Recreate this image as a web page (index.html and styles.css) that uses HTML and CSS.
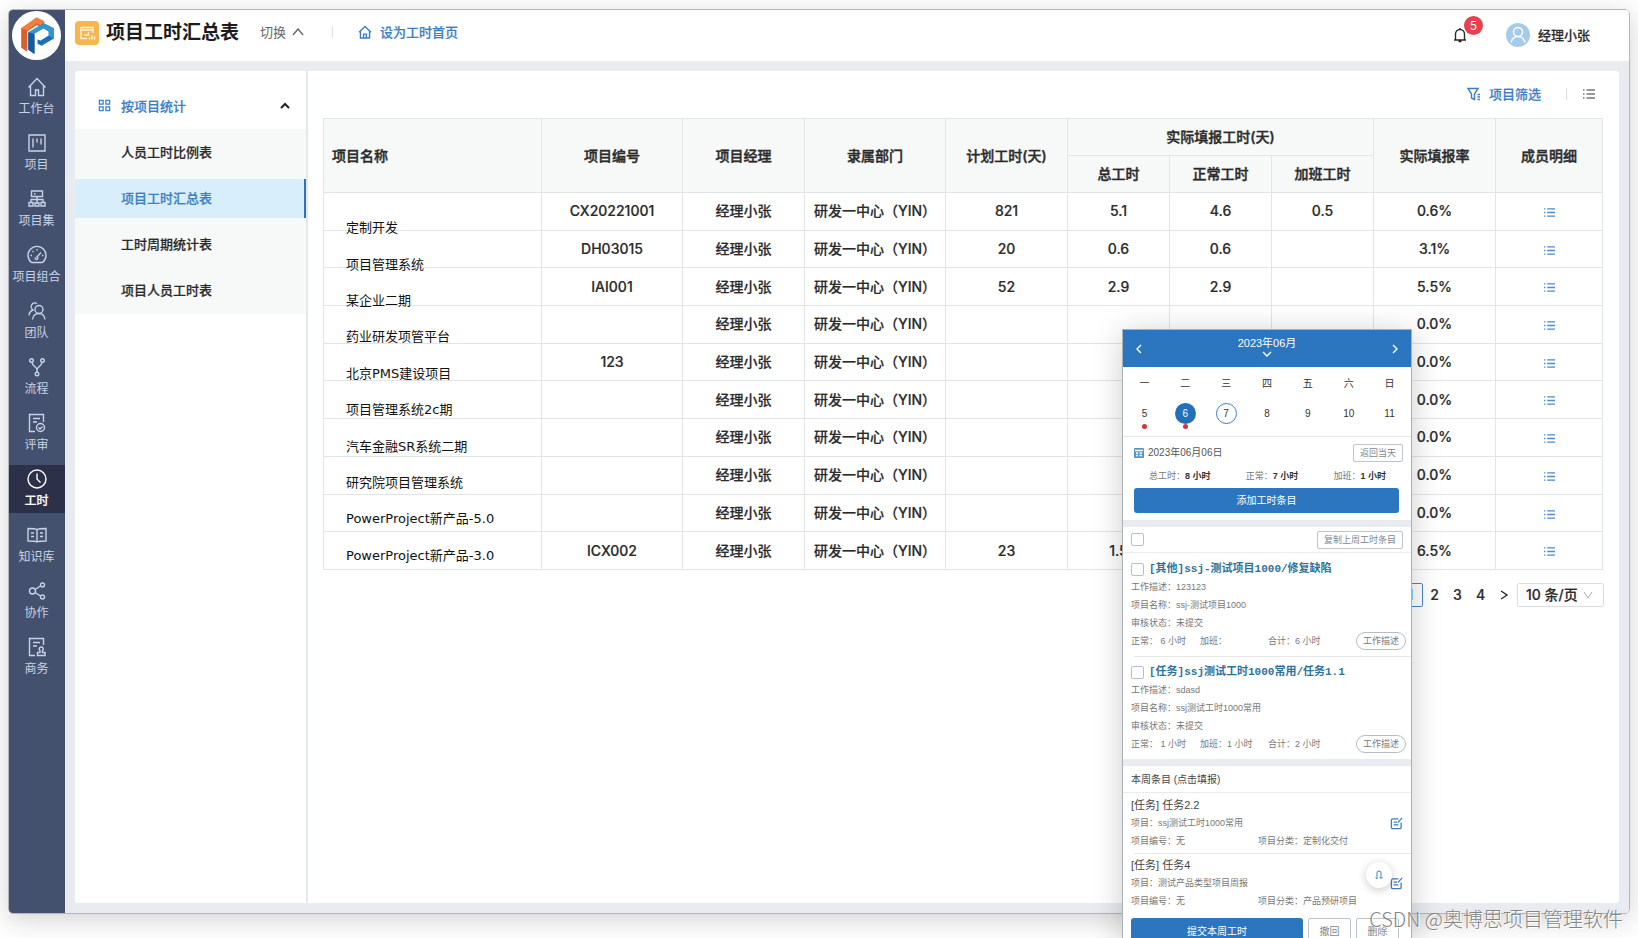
FILE: index.html
```html
<!DOCTYPE html>
<html lang="zh-CN">
<head>
<meta charset="utf-8">
<title>项目工时汇总表</title>
<link rel="stylesheet" href="styles.css">
</head>
<body>
<svg class="sprite" aria-hidden="true">
  <symbol id="list" viewBox="0 0 14 12"><path d="M1 2h1.500M1 6h1.500M1 10h1.500M4.500 2H13M4.500 6H13M4.500 10H13"/></symbol>
  <symbol id="edit" viewBox="0 0 14 14"><path d="M9 2H3a1.500 1.500 0 0 0-1.500 1.500v7.500A1.500 1.500 0 0 0 3 12.500h7.500A1.500 1.500 0 0 0 12 11V6M4 5.500h3.500M4 8.500h5M8.500 6l4.500-5"/></symbol>
</svg>

<div class="window">
  <nav class="rail" aria-label="主导航">
    <a class="logo" href="#" aria-label="首页">
      <svg viewBox="0 0 48 48"><circle cx="24" cy="24" r="24" fill="#fff"/>
        <path d="M9 17v19l6 4V20l9-6 4 1 4-4-8-4z" fill="#d9602a"/><path d="M9 17 24 6l8 4-4 4-4-2-9 7z" fill="#ee8040"/>
        <path d="m16 21 15-9 10 5v10l-12 7-4-2v-4l3 1 8-5v-4l-5-3-9 5v20l-6-4z" fill="#1c6fb5"/><path d="m31 12 10 5v10l-5-3v-4l-5-3-9 5-6-1z" fill="#3496d2"/><path d="m16 21 6 2v19l-6-4z" fill="#185a9f"/></svg>
    </a>
    <ul class="rail-list">
      <li><a href="#"><svg viewBox="0 0 20 20"><path d="m1.500 10.500 8.500-9 8.500 9M3.500 9v9.500h5v-5.500h3v5.500h5V9"/></svg>工作台</a></li>
      <li><a href="#"><svg viewBox="0 0 20 20"><path d="M2 2h16v16H2zM6 5.500v9M10 5.500v4M14 5.500v6"/></svg>项目</a></li>
      <li><a href="#"><svg viewBox="0 0 20 20"><path d="M4.500 2h11v5.500h-11zM7 4.700h1.500M10 7.500V15M4 13.500v-3h12v3M2 13.500h4V17H2zM8 14h4v3H8zM14 13.500h4V17h-4z"/></svg>项目集</a></li>
      <li><a href="#"><svg viewBox="0 0 20 20"><path d="M4.500 17.500a9 9 0 1 1 11 0zM9.500 12.500l4.500-5M10 4v1.500M5.500 6l1 1M3.500 10.500H5M15 10.500h1.500M8.500 12.500a1.200 1.200 0 1 0 2 0"/></svg>项目组合</a></li>
      <li><a href="#"><svg viewBox="0 0 20 20"><circle cx="12" cy="8.500" r="4"/><path d="M5.500 18.500c.5-4 3-6 6.500-6s5.500 2 6 6M10 2.500a3.800 3.800 0 1 0-4 6.500c-2.500 1-4 2.500-4 5.500"/></svg>团队</a></li>
      <li><a href="#"><svg viewBox="0 0 20 20"><circle cx="4.500" cy="3.500" r="1.800"/><circle cx="15.500" cy="3.500" r="1.800"/><circle cx="10" cy="17" r="1.800"/><path d="M5 5.500c.5 4 5 4 5 7.500v2M15 5.500c-.5 4-5 4-5 7.500"/></svg>流程</a></li>
      <li><a href="#"><svg viewBox="0 0 20 20"><path d="M8 18.500H2.500v-17h14V9M6 5.500h7M6 9h4"/><circle cx="13.500" cy="14.500" r="4"/><path d="m11.500 14.500 1.500 1.500 2.500-2.500"/></svg>评审</a></li>
      <li><a href="#" class="current" aria-current="page"><svg viewBox="0 0 20 20"><circle cx="10" cy="10" r="9"/><path d="M10 4.500V10l3.500 3.500"/></svg>工时</a></li>
      <li><a href="#"><svg viewBox="0 0 20 20"><path d="M10 4.500C8.500 3.500 6 3.500 1 3.500v12.500c5 0 7.500 0 9 1 1.500-1 4-1 9-1V3.500c-5 0-7.500 0-9 1zV17M4 8h3M4 11.500h3M13 8h3M13 11.500h3"/></svg>知识库</a></li>
      <li><a href="#"><svg viewBox="0 0 20 20"><circle cx="5.500" cy="10" r="3"/><circle cx="15.500" cy="4" r="2"/><circle cx="15.500" cy="16" r="2"/><path d="m8 8.500 5.500-3.500M8 11.500l5.500 3.500"/></svg>协作</a></li>
      <li><a href="#"><svg viewBox="0 0 20 20"><path d="M8 18.500H2.500v-17h14V8M6 5.500h7M6 9h4M10.500 18.500v-3h2.500v-2a2 2 0 1 1 2.500 0v2H18v3z"/></svg>商务</a></li>
    </ul>
  </nav>

  <div class="main">
    <header class="topbar">
      <svg class="app-icon" viewBox="0 0 24 24"><rect width="24" height="24" rx="4" fill="#f6b64d"/><g fill="none" stroke="#fff2d8" stroke-width="1.500"><path d="M12 17.500H6v-11h12V12M6 9h12M9.500 14h4V11M14.500 18.500v-2M17 18.500v-4M19.500 18.500v-3"/></g></svg>
      <h1>项目工时汇总表</h1>
      <button class="switch" type="button">切换<svg viewBox="0 0 12 8"><path d="m1 7 5-6 5 6"/></svg></button>
      <span class="rule"></span>
      <a class="set-home" href="#"><svg viewBox="0 0 20 20"><path d="m1.500 10.500 8.500-8.500 8.500 8.500M3.500 9v9.500h13V9M8 18v-5h4v5"/></svg>设为工时首页</a>
      <button class="bell" type="button" aria-label="通知"><svg viewBox="0 0 14 16"><path d="M1 13h12M2.500 13V7a4.500 4.500 0 0 1 9 0v6M7 2.500V1M5.500 14.500h3"/></svg><span class="badge">5</span></button>
      <a class="user" href="#"><svg viewBox="0 0 24 24"><circle cx="12" cy="12" r="12" fill="#a5cbea"/><g fill="none" stroke="#fff" stroke-width="1.400"><circle cx="12" cy="9" r="4.500"/><path d="M5 19.500c1-4 3.500-6 7-6s6 2 7 6"/></g></svg>经理小张</a>
    </header>

    <div class="panel">
      <aside class="menu">
        <button class="menu-head" type="button" aria-expanded="true"><svg viewBox="0 0 14 14"><path d="M1.500 1.500h4v4h-4zM8.500 1.500h4v4h-4zM1.500 8.500h4v4h-4zM8.500 8.500h4v4h-4z"/></svg><span>按项目统计</span><svg class="fold" viewBox="0 0 10 8"><path d="m1 6 4-4 4 4"/></svg></button>
        <ul>
          <li><a href="#">人员工时比例表</a></li>
          <li><a href="#" class="current">项目工时汇总表</a></li>
          <li><a href="#">工时周期统计表</a></li>
          <li><a href="#">项目人员工时表</a></li>
        </ul>
      </aside>

      <section class="report">
        <div class="tools">
          <button class="filter" type="button"><svg viewBox="0 0 14 14"><path d="M1 1.500h10L7.500 7v5.500l-3-1.500V7zM10.500 7.500H13M10.500 10H13M10.500 12.500H13"/></svg>项目筛选</button>
          <span class="rule"></span>
          <button class="columns" type="button" aria-label="列表"><svg><use href="#list"/></svg></button>
        </div>
        <div class="table-box">
          <table>
            <colgroup><col class="w-name"><col class="w-dept"><col class="w-mid"><col class="w-dept"><col class="w-mid"><col class="w-hour"><col class="w-hour"><col class="w-hour"><col class="w-mid"><col class="w-last"></colgroup>
            <thead>
              <tr><th rowspan="2" class="left">项目名称</th><th rowspan="2">项目编号</th><th rowspan="2">项目经理</th><th rowspan="2">隶属部门</th><th rowspan="2">计划工时(天)</th><th colspan="3">实际填报工时(天)</th><th rowspan="2">实际填报率</th><th rowspan="2">成员明细</th></tr>
              <tr><th>总工时</th><th>正常工时</th><th>加班工时</th></tr>
            </thead>
            <tbody>
              <tr><td></td><td>CX20221001</td><td>经理小张</td><td>研发一中心（YIN）</td><td>821</td><td>5.1</td><td>4.6</td><td>0.5</td><td>0.6%</td><td><a href="#" aria-label="明细"><svg><use href="#list"/></svg></a></td></tr>
              <tr><td></td><td>DH03015</td><td>经理小张</td><td>研发一中心（YIN）</td><td>20</td><td>0.6</td><td>0.6</td><td></td><td>3.1%</td><td><a href="#" aria-label="明细"><svg><use href="#list"/></svg></a></td></tr>
              <tr><td></td><td>IAI001</td><td>经理小张</td><td>研发一中心（YIN）</td><td>52</td><td>2.9</td><td>2.9</td><td></td><td>5.5%</td><td><a href="#" aria-label="明细"><svg><use href="#list"/></svg></a></td></tr>
              <tr><td></td><td></td><td>经理小张</td><td>研发一中心（YIN）</td><td></td><td></td><td></td><td></td><td>0.0%</td><td><a href="#" aria-label="明细"><svg><use href="#list"/></svg></a></td></tr>
              <tr><td></td><td>123</td><td>经理小张</td><td>研发一中心（YIN）</td><td></td><td></td><td></td><td></td><td>0.0%</td><td><a href="#" aria-label="明细"><svg><use href="#list"/></svg></a></td></tr>
              <tr><td></td><td></td><td>经理小张</td><td>研发一中心（YIN）</td><td></td><td></td><td></td><td></td><td>0.0%</td><td><a href="#" aria-label="明细"><svg><use href="#list"/></svg></a></td></tr>
              <tr><td></td><td></td><td>经理小张</td><td>研发一中心（YIN）</td><td></td><td></td><td></td><td></td><td>0.0%</td><td><a href="#" aria-label="明细"><svg><use href="#list"/></svg></a></td></tr>
              <tr><td></td><td></td><td>经理小张</td><td>研发一中心（YIN）</td><td></td><td></td><td></td><td></td><td>0.0%</td><td><a href="#" aria-label="明细"><svg><use href="#list"/></svg></a></td></tr>
              <tr><td></td><td></td><td>经理小张</td><td>研发一中心（YIN）</td><td></td><td></td><td></td><td></td><td>0.0%</td><td><a href="#" aria-label="明细"><svg><use href="#list"/></svg></a></td></tr>
              <tr><td></td><td>ICX002</td><td>经理小张</td><td>研发一中心（YIN）</td><td>23</td><td>1.5</td><td></td><td></td><td>6.5%</td><td><a href="#" aria-label="明细"><svg><use href="#list"/></svg></a></td></tr>
            </tbody>
          </table>
          <ol class="names">
            <li>定制开发</li><li>项目管理系统</li><li>某企业二期</li><li>药业研发项管平台</li><li>北京PMS建设项目</li><li>项目管理系统2c期</li><li>汽车金融SR系统二期</li><li>研究院项目管理系统</li><li>PowerProject新产品-5.0</li><li>PowerProject新产品-3.0</li>
          </ol>
        </div>
        <div class="pager">
          <button type="button" class="current">1</button><button type="button">2</button><button type="button">3</button><button type="button">4</button><button type="button" aria-label="下一页"><svg viewBox="0 0 8 10"><path d="m1 1 6 4-6 4"/></svg></button>
          <label class="size"><select aria-label="每页条数"><option>10 条/页</option></select><svg viewBox="0 0 10 8"><path d="m1 1 4 6 4-6"/></svg></label>
        </div>
      </section>
    </div>
  </div>
</div>

<div class="phone">
  <div class="month">
    <button type="button" aria-label="上一周"><svg viewBox="0 0 6 10"><path d="M5 1 1 5l4 4"/></svg></button>
    <div class="month-name">2023年06月<svg viewBox="0 0 10 6"><path d="m1 1 4 4 4-4"/></svg></div>
    <button type="button" aria-label="下一周"><svg viewBox="0 0 6 10"><path d="m1 1 4 4-4 4"/></svg></button>
  </div>
  <div class="week names-row"><span>一</span><span>二</span><span>三</span><span>四</span><span>五</span><span>六</span><span>日</span></div>
  <div class="week days"><span class="dot">5</span><span class="dot on">6</span><span class="today">7</span><span>8</span><span>9</span><span>10</span><span>11</span></div>
  <div class="day">
    <div class="day-head"><svg viewBox="0 0 10 10"><rect width="10" height="10" rx="1" fill="#5a93c8"/><path d="M1 2.500h8M2 5h2M5.500 5H8M2 7.500h2M5.500 7.500H8" stroke="#fff"/></svg><span>2023年06月06日</span><button type="button" class="line-btn">返回当天</button></div>
    <div class="sums"><span>总工时：<b>8 小时</b></span><span>正常：<b>7 小时</b></span><span>加班：<b>1 小时</b></span></div>
    <button type="button" class="blue-btn">添加工时条目</button>
  </div>
  <div class="band"></div>
  <div class="copy"><input type="checkbox" aria-label="全选"><button type="button" class="line-btn">复制上周工时条目</button></div>
  <article class="entry">
    <label><input type="checkbox">[其他]ssj-测试项目1000/修复缺陷</label>
    <p>工作描述：123123</p><p>项目名称：ssj-测试项目1000</p><p>审核状态：未提交</p>
    <div class="hours"><span>正常： 6 小时</span><span>加班：</span><span>合计：6 小时</span><button type="button" class="pill">工作描述</button></div>
  </article>
  <article class="entry">
    <label><input type="checkbox">[任务]ssj测试工时1000常用/任务1.1</label>
    <p>工作描述：sdasd</p><p>项目名称：ssj测试工时1000常用</p><p>审核状态：未提交</p>
    <div class="hours"><span>正常： 1 小时</span><span>加班：1 小时</span><span>合计：2 小时</span><button type="button" class="pill">工作描述</button></div>
  </article>
  <div class="band"></div>
  <h2>本周条目 (点击填报)</h2>
  <article class="task">
    <div class="task-text"><h3>[任务] 任务2.2</h3><p>项目：ssj测试工时1000常用</p><p class="pair"><span>项目编号：无</span><span>项目分类：定制化交付</span></p></div>
    <button type="button" aria-label="编辑"><svg><use href="#edit"/></svg></button>
  </article>
  <article class="task">
    <div class="task-text"><h3>[任务] 任务4</h3><p>项目：测试产品类型项目周报</p><p class="pair"><span>项目编号：无</span><span>项目分类：产品预研项目</span></p></div>
    <button type="button" aria-label="编辑"><svg><use href="#edit"/></svg></button>
    <button type="button" class="float" aria-label="返回"><svg viewBox="0 0 8 10"><path d="M2 9V3a2 2 0 0 1 4 0v5M.500 7.500 2 9M4.500 7 6 8.500 7.500 7"/></svg></button>
  </article>
  <div class="actions"><button type="button" class="blue-btn">提交本周工时</button><button type="button" class="line-btn">撤回</button><button type="button" class="line-btn">删除</button></div>
</div>

<div class="watermark">CSDN @奥博思项目管理软件</div>
</body>
</html>
```
FILE: styles.css
```css
* { box-sizing: border-box; }
body {
  margin: 0;
  height: 100vh;
  overflow: hidden;
  padding: 9px 8px 24px;
  position: relative;
  background: #fff;
  color: #2b2b2b;
  font: 13px/20px "Inter", "Noto Sans CJK SC", sans-serif;
}
ul, ol, p, h1, h2, h3 { margin: 0; padding: 0; list-style: none; }
button { border: 0; padding: 0; background: none; font: inherit; color: inherit; }
a { color: inherit; text-decoration: none; }
svg { fill: none; stroke: currentColor; stroke-width: 1.4; flex: none; display: block; }
.sprite { position: absolute; width: 0; height: 0; }

.window {
  display: flex;
  height: 100%;
  border: 1px solid #b3b6ba;
  border-radius: 5px;
  overflow: hidden;
  box-shadow: 0 6px 28px rgba(0, 0, 0, .18);
}
.rail { width: 56px; background: #44516e; color: #c6d3e6; flex: none; }
.logo { display: block; padding: 1px 3px 0; }
.logo svg { width: 49px; height: 49px; stroke: none; }
.rail-list { display: grid; gap: 8px; padding-top: 13px; }
.rail-list a {
  height: 48px;
  display: flex;
  flex-direction: column;
  align-items: center;
  gap: 4px;
  padding: 4px 1px 0 0;
  font-size: 12px;
  line-height: 16px;
}
.rail-list svg { width: 20px; height: 20px; }
.rail-list .current { background: #2c3149; color: #fff; font-weight: 500; -webkit-text-stroke: 0.2px; }

.main { flex: 1; min-width: 0; display: flex; flex-direction: column; background: #e8ebf0; }
.topbar { height: 51px; flex: none; display: flex; align-items: center; background: #fff; padding: 0 39px 8px 10px; }
.app-icon { width: 24px; height: 24px; stroke: none; margin-top: 2px; }
h1 { font-size: 19px; line-height: 28px; font-weight: 700; color: #1c1c1c; margin: 2px 0 0 7px; }
.switch { display: flex; align-items: center; gap: 6px; color: #666; margin-left: 21px; }
.switch svg { width: 12px; height: 8px; }
.rule { width: 1px; height: 12px; background: #dcdfe2; }
.topbar .rule { margin: 0 25px 0 28px; }
.set-home { display: flex; align-items: center; gap: 8px; color: #3a80c6; }
.set-home svg { width: 14px; height: 14px; stroke-width: 2; }
.set-home, .user, .menu, .filter, table, .pager { font-weight: 500; -webkit-text-stroke: 0.2px; }
.bell { margin: 6px 0 0 auto; position: relative; }
.bell svg { width: 14px; height: 16px; }
.badge {
  position: absolute;
  left: 11px;
  top: -11px;
  width: 19px;
  height: 19px;
  border-radius: 50%;
  background: #e8414d;
  color: #fff;
  font-size: 12px;
  line-height: 19px;
}
.user { display: flex; align-items: center; gap: 8px; margin: 6px 0 0 39px; }
.user svg { width: 24px; height: 24px; stroke: none; }

.panel { flex: 1; min-height: 0; display: flex; margin: 10px; background: #fff; border-radius: 3px; }
.menu { width: 233px; flex: none; border-right: 2px solid #e4e8ea; }
.menu-head { display: flex; align-items: center; width: 100%; height: 58px; padding: 11px 16px 0 23px; color: #3a80c6; text-align: left; }
.menu-head span { flex: 1; margin-left: 10px; }
.menu-head svg { width: 13px; height: 13px; }
.menu-head .fold { width: 10px; height: 8px; color: #222; stroke-width: 2; }
.menu ul { display: grid; gap: 7px; background: #f7f8f8; padding: 4px 0; }
.menu li a { display: block; line-height: 39px; padding-left: 46px; }
.menu .current { background: #d9eefb; color: #3a80c6; border-right: 2px solid #3071b8; }

.report { flex: 1; min-width: 0; padding: 0 16px 0 15px; }
.tools { height: 47px; display: flex; align-items: center; justify-content: flex-end; padding: 0 7px 2px 0; }
.filter { display: flex; align-items: center; gap: 8px; color: #3a80c6; }
.filter svg { width: 14px; height: 14px; }
.tools .rule { margin: 0 15px 0 25px; }
.columns { color: #777; }
.columns svg { width: 14px; height: 12px; }
.table-box { position: relative; }
table { width: 100%; height: 452px; table-layout: fixed; border-collapse: collapse; font-size: 14px; line-height: 20px; text-align: center; }
.w-name { width: 218px; }
.w-dept { width: 141px; }
.w-mid { width: 122px; }
.w-hour { width: 102px; }
.w-last { width: 107px; }
th, td { border: 1px solid #e2e5e5; padding: 0; white-space: nowrap; }
tr { height: 37px; }
th { background: #f7f8f8; -webkit-text-stroke: 0.4px; font-weight: 500; }
.left { text-align: left; padding-left: 8px; }
td a { color: #4a8cd0; display: inline-block; vertical-align: middle; }
td svg { width: 13px; height: 11px; }
.names {
  position: absolute;
  left: 23px;
  top: 92px;
  height: 364px;
  display: grid;
  grid-auto-rows: 1fr;
  align-items: center;
  color: #111;
  font-family: "DejaVu Sans", "Noto Sans CJK SC", sans-serif;
}
.pager { display: flex; justify-content: flex-end; margin: 13px -1px 0 0; font-size: 14px; }
.pager button { width: 23px; height: 24px; display: grid; place-items: center; }
.pager button svg { width: 8px; height: 10px; }
.pager .current { width: 25px; border: 1px solid #4a86c8; border-radius: 2px; color: #3a80c6; }
.size { position: relative; margin-left: 2px; }
.size select { appearance: none; width: 87px; height: 24px; border: 1px solid #dadddf; border-radius: 2px; background: #fff; padding: 0 0 0 8px; font: inherit; color: inherit; }
.size svg { position: absolute; right: 11px; top: 8px; width: 10px; height: 8px; color: #aaa; stroke-width: 1; }

.phone {
  position: absolute;
  top: 329px;
  right: 226px;
  width: 290px;
  background: #fff;
  border: 1px solid #aab2b8;
  box-shadow: 0 4px 30px rgba(0, 0, 0, .2);
  font: 9px/18px "Liberation Sans", "Noto Sans CJK SC", sans-serif;
  color: #777;
}
.month { height: 37px; background: #2b76be; color: #fff; display: flex; align-items: center; justify-content: space-between; padding: 0 13px; font-size: 11px; line-height: 16px; }
.month svg { width: 6px; height: 10px; }
.month-name { display: grid; justify-items: center; padding-bottom: 5px; }
.month-name svg { width: 10px; height: 6px; }
.week { display: grid; grid-template-columns: repeat(7, 1fr); justify-items: center; color: #333; font-size: 10px; padding: 0 1px; }
.names-row { padding-top: 8px; }
.days { line-height: 21px; padding: 10px 1px 12px; border-bottom: 1px solid #e3e5e7; }
.days span { width: 21px; height: 21px; border-radius: 50%; text-align: center; position: relative; }
.days .on { background: #2370b8; color: #fff; }
.days .today { border: 1px solid #3b7fb8; line-height: 19px; }
.dot::after { content: ""; position: absolute; left: 8px; top: 21px; width: 5px; height: 5px; border-radius: 50%; background: #d0353f; }
.day { padding: 7px 12px 7px 11px; }
.day-head { display: flex; align-items: center; gap: 4px; font-size: 10px; color: #555; }
.day-head svg { width: 10px; height: 10px; stroke: none; }
.day-head span { flex: 1; }
.day-head .line-btn { margin-right: -4px; }
.line-btn { height: 18px; border: 1px solid #bcc5cc; border-radius: 2px; padding: 0 6px; font-size: 9px; line-height: 16px; background: #fff; color: #7d8890; }
.sums { display: flex; justify-content: space-between; padding: 5px 13px 3px 15px; }
.sums b { color: #333; }
.blue-btn { height: 25px; border-radius: 3px; background: #2b76be; color: #fff; font-size: 10px; }
.day .blue-btn { width: 100%; display: block; }
.band { height: 7px; background: #e9ebf0; }
.copy { display: flex; align-items: center; justify-content: space-between; height: 26px; padding: 0 8px; border-bottom: 1px solid #ebedee; }
.phone input { appearance: none; width: 13px; height: 13px; margin: 0; border: 1px solid #b9bfc4; border-radius: 2px; background: #fff; }
.entry { height: 103px; padding: 8px 5px 0 8px; position: relative; }
.entry label { display: flex; align-items: center; gap: 5px; height: 17px; font: 700 11px/17px "Liberation Mono", "Noto Sans CJK SC", monospace; color: #2f7299; white-space: nowrap; }
.entry + .entry::before, .task + .task::before { content: ""; position: absolute; left: 11px; right: 0; top: 0; border-top: 1px solid #e3e5e7; }
.hours { display: grid; grid-template-columns: 69px 68px 1fr auto; }
.pill { height: 18px; border: 1px solid #b5bcc2; border-radius: 9px; padding: 0 6px; line-height: 16px; background: #fff; }
.phone h2 { font-size: 10px; line-height: 25px; font-weight: 400; color: #444; padding: 1px 0 0 8px; border-bottom: 1px solid #e8eaeb; }
.task { display: flex; align-items: center; position: relative; height: 60px; padding: 0 8px; color: #3f7fb5; }
.task svg { width: 13px; height: 13px; }
.task-text { flex: 1; color: #777; }
.phone h3 { font-size: 11px; line-height: 18px; font-weight: 400; color: #444; }
.pair { display: grid; grid-template-columns: 127px 1fr; }
.float { position: absolute; right: 19px; top: 9px; width: 26px; height: 26px; border-radius: 50%; background: #fff; box-shadow: 0 2px 8px rgba(0, 0, 0, .22); display: grid; place-items: center; }
.task .float svg { width: 8px; height: 10px; stroke-width: 1; }
.actions { display: flex; gap: 5px; padding: 5px 12px 0 8px; }
.actions button { height: 27px; font-size: 10px; }
.actions .blue-btn { flex: 1; }
.actions .line-btn { width: 43px; }

.watermark {
  position: absolute;
  right: 15px;
  bottom: 5px;
  font: 20px/28px "Noto Sans CJK SC", sans-serif;
  font-weight: 300;
  color: #858585;
  text-shadow: 1px 1px 0 #fff;
}
```
